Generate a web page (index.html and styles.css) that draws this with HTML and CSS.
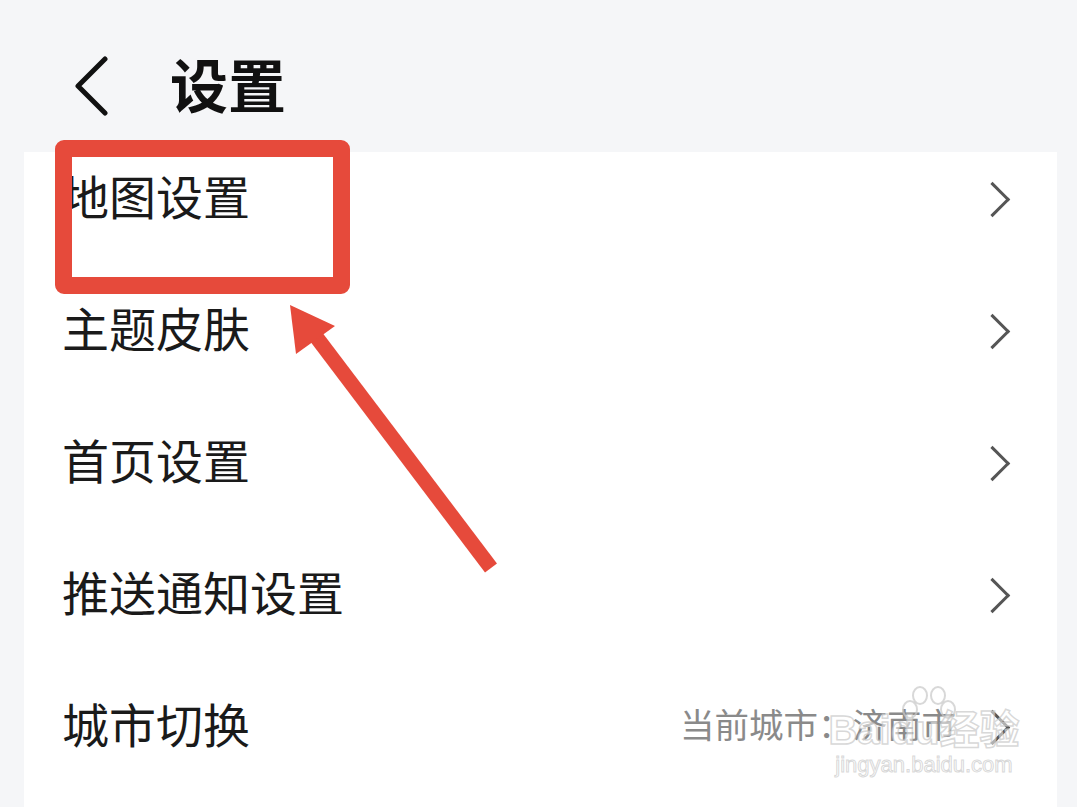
FILE: index.html
```html
<!DOCTYPE html>
<html lang="zh-CN">
<head>
    <meta charset="UTF-8">
    <meta name="viewport" content="width=device-width, initial-scale=1.0">
    <title>设置</title>
    <link rel="stylesheet" href="styles.css">
</head>
<body>

    <!-- Header -->
    <div class="header">
        <svg class="back-icon" width="40" height="60" viewBox="0 0 40 60">
            <polyline points="33,3 6,30 33,57" fill="none" stroke="#111" stroke-width="5" stroke-linecap="round" stroke-linejoin="round"/>
        </svg>
        <h1 class="title">设置</h1>
    </div>

    <!-- Settings list -->
    <div class="card">
        <div class="menu-row">
            <span class="row-label">地图设置</span>
            <span class="row-right"><span class="chevron"></span></span>
        </div>
        <div class="menu-row">
            <span class="row-label">主题皮肤</span>
            <span class="row-right"><span class="chevron"></span></span>
        </div>
        <div class="menu-row">
            <span class="row-label">首页设置</span>
            <span class="row-right"><span class="chevron"></span></span>
        </div>
        <div class="menu-row">
            <span class="row-label">推送通知设置</span>
            <span class="row-right"><span class="chevron"></span></span>
        </div>
        <div class="menu-row">
            <span class="row-label">城市切换</span>
            <span class="row-right"><span class="row-value">当前城市：济南市</span><span class="chevron"></span></span>
        </div>
    </div>

    <!-- Annotation: highlight box and arrow -->
    <div class="highlight-box"></div>
    <svg class="arrow" width="1077" height="807" viewBox="0 0 1077 807">
        <line x1="491" y1="568" x2="314" y2="334" stroke="#e64a3b" stroke-width="15"/>
        <polygon points="290,305 335,326 296,354" fill="#e64a3b"/>
    </svg>

    <!-- Watermark -->
    <div class="watermark">
        <div class="paw">
            <span></span><span></span><span></span><span></span>
        </div>
        <div class="wm-brand">Baidu经验</div>
        <div class="wm-url">jingyan.baidu.com</div>
    </div>

</body>
</html>
```

FILE: styles.css
```css
/* General Styles */
body {
    margin: 0;
    padding: 0;
    width: 1077px;
    height: 807px;
    overflow: hidden;
    background-color: #f5f6f8;
    font-family: "Noto Sans CJK SC", "Noto Sans", sans-serif;
    color: #1a1a1a;
    position: relative;
}

/* Header */
.header {
    height: 152px;
    display: flex;
    align-items: flex-start;
    box-sizing: border-box;
    padding: 56px 0 0 72px;
}

.back-icon {
    display: block;
}

.title {
    margin: -15px 0 0 58px;
    font-size: 58px;
    font-weight: 700;
    line-height: 84px;
    color: #111;
}

/* Card */
.card {
    margin: 0 20px 0 24px;
    background-color: #fff;
    height: 655px;
}

.menu-row {
    height: 132px;
    display: flex;
    align-items: center;
    justify-content: space-between;
    padding: 0 46px 10px 38px;
    box-sizing: border-box;
}

.menu-row:first-child {
    height: 114px;
    padding-bottom: 28px;
}

.row-label {
    font-size: 47px;
    line-height: 60px;
}

.row-right {
    display: flex;
    align-items: center;
}

.row-value {
    font-size: 34.5px;
    color: #8a8a8a;
    margin-right: 24px;
}

.chevron {
    display: block;
    width: 22px;
    height: 22px;
    border-top: 3px solid #555;
    border-right: 3px solid #555;
    transform: rotate(45deg);
    margin: 8px 6px 0 0;
}

/* Annotation */
.highlight-box {
    position: absolute;
    left: 55px;
    top: 140px;
    width: 295px;
    height: 154px;
    box-sizing: border-box;
    border: 17px solid #e64a3b;
    border-radius: 9px;
}

.arrow {
    position: absolute;
    left: 0;
    top: 0;
}

/* Watermark */
.watermark {
    position: absolute;
    left: 826px;
    top: 686px;
    width: 196px;
    text-align: center;
}

.paw {
    position: relative;
    height: 24px;
}

.paw span {
    position: absolute;
    width: 12px;
    height: 15px;
    border: 2px solid rgba(200, 200, 200, 0.7);
    border-radius: 50%;
}

.paw span:nth-child(1) { left: 86px; top: 0; }
.paw span:nth-child(2) { left: 104px; top: 0; }
.paw span:nth-child(3) { left: 76px; top: 14px; }
.paw span:nth-child(4) { left: 114px; top: 14px; }

.wm-brand {
    font-family: "Liberation Sans", "Noto Sans CJK SC", sans-serif;
    font-size: 40px;
    line-height: 40px;
    font-weight: 700;
    color: rgba(255, 255, 255, 0.55);
    -webkit-text-stroke: 1.5px rgba(190, 190, 190, 0.6);
}

.wm-url {
    font-family: "Liberation Sans", sans-serif;
    font-size: 22px;
    line-height: 30px;
    color: rgba(255, 255, 255, 0.5);
    -webkit-text-stroke: 1px rgba(190, 190, 190, 0.6);
}
```
